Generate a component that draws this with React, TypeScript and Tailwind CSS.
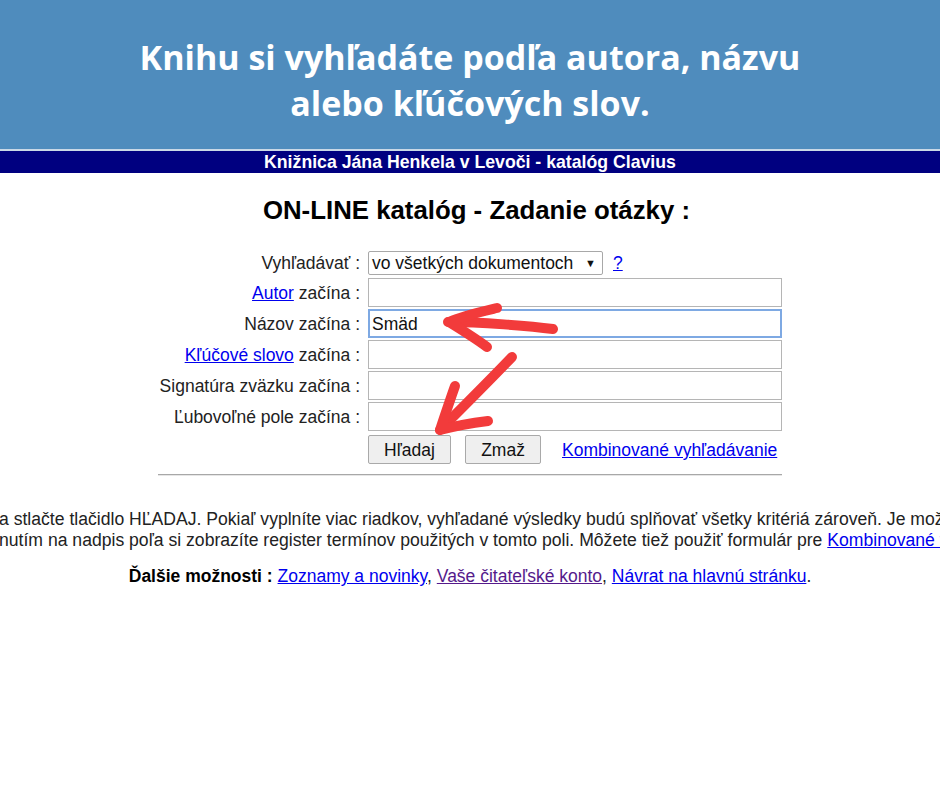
import React from "react";

const arial = { fontFamily: '"Liberation Sans", Arial, sans-serif' };

function Arrows() {
  return (
    <svg className="absolute left-0 top-0 pointer-events-none" width="940" height="788" viewBox="0 0 940 788">
      <g stroke="#f23b3b" strokeWidth="10" strokeLinecap="round" strokeLinejoin="round" fill="none">
        <path d="M553 329 C 530 326, 480 322, 448 322" />
        <path d="M497 308 C 480 312, 462 316, 449 322 C 462 330, 475 338, 487 347" />
        <path d="M512 357 C 490 380, 465 405, 440 430" />
        <path d="M455 386 C 450 400, 445 415, 440 430 C 455 426, 472 423, 488 421" />
      </g>
    </svg>
  );
}

function Input({ value, focused }: { value?: string; focused?: boolean }) {
  return (
    <div
      className={
        "h-[29px] w-[414px] bg-white flex items-center px-[2px] text-[17.5px] text-[#111] " +
        (focused ? "border-2 border-[#7ea9e3]" : "border border-[#b5b5b5]")
      }
    >
      {value}
    </div>
  );
}

export default function App() {
  return (
    <div className="relative w-[940px] h-[788px] bg-white overflow-hidden" style={arial}>
      <div className="h-[149px] bg-[#4f8cbd] flex flex-col items-center justify-center pt-[10px]">
        <div
          className="text-white font-bold text-[34px] leading-[46px] text-center"
          style={{ fontFamily: '"Open Sans", sans-serif' }}
        >
          <div>Knihu si vyhľadáte podľa autora, názvu</div>
          <div>alebo kľúčových slov.</div>
        </div>
      </div>
      <div className="h-[2px] bg-[#c9d8e6]" />
      <div className="h-[22px] bg-[#000080] flex items-center justify-center text-white font-bold text-[17.7px]">
        Knižnica Jána Henkela v Levoči - katalóg Clavius
      </div>

      <div className="text-center font-bold text-[25.8px] text-black mt-[22px] leading-[30px] pl-[13px]">
        ON-LINE katalóg - Zadanie otázky :
      </div>

      <div className="ml-[158px] w-[624px] mt-[25px] text-[17.5px] text-[#222]">
        <div className="grid grid-cols-[210px_414px] gap-y-[2px] items-center">
          <div className="text-right pr-[8px]">Vyhľadávať :</div>
          <div className="flex items-center h-[24px]">
            <div className="h-[24px] w-[235px] border border-[#a8a8a8] rounded-[2px] flex items-center justify-between pl-[3px] pr-[6px] text-[#111]">
              <span>vo všetkých dokumentoch</span>
              <span className="text-[11px]">▼</span>
            </div>
            <a className="ml-[10px] text-[#0000ee] underline">?</a>
          </div>

          <div className="text-right pr-[8px]">
            <a className="text-[#0000ee] underline">Autor</a> začína :
          </div>
          <Input />
          <div className="text-right pr-[8px]">Názov začína :</div>
          <Input value="Smäd" focused />
          <div className="text-right pr-[8px]">
            <a className="text-[#0000ee] underline">Kľúčové slovo</a> začína :
          </div>
          <Input />
          <div className="text-right pr-[8px]">Signatúra zväzku začína :</div>
          <Input />
          <div className="text-right pr-[8px]">Ľubovoľné pole začína :</div>
          <Input />
          <div />
          <div className="flex items-center h-[31px] pt-[2px]">
            <button className="h-[29px] w-[83px] bg-[#efefef] border border-[#a9a9a9] rounded-[2px] text-[17.5px] text-[#111]">
              Hľadaj
            </button>
            <button className="ml-[14px] h-[29px] w-[76px] bg-[#efefef] border border-[#a9a9a9] rounded-[2px] text-[17.5px] text-[#111]">
              Zmaž
            </button>
            <a className="ml-[21px] text-[#0000ee] underline">Kombinované vyhľadávanie</a>
          </div>
        </div>
        <div className="mt-[10px] h-[2px] border-t border-[#a8a8a8] border-b border-b-[#e6e6e6]" />
      </div>

      <div className="mt-[33px] text-[17.6px] leading-[21px] text-[#222] whitespace-nowrap overflow-hidden">
        <div className="-ml-[1px]">
          a stlačte tlačidlo HĽADAJ. Pokiaľ vyplníte viac riadkov, vyhľadané výsledky budú splňovať všetky kritériá zároveň. Je možné
        </div>
        <div className="-ml-[1px]">
          nutím na nadpis poľa si zobrazíte register termínov použitých v tomto poli. Môžete tiež použiť formulár pre{" "}
          <a className="text-[#0000ee] underline">Kombinované vyhľadávanie</a>
        </div>
      </div>

      <div className="mt-[12px] text-center text-[17.5px] text-[#222]">
        <b className="text-black">Ďalšie možnosti :</b>{" "}
        <a className="text-[#0000ee] underline">Zoznamy a novinky</a>,{" "}
        <a className="text-[#551a8b] underline">Vaše čitateľské konto</a>,{" "}
        <a className="text-[#0000ee] underline">Návrat na hlavnú stránku</a>.
      </div>

      <Arrows />
    </div>
  );
}
